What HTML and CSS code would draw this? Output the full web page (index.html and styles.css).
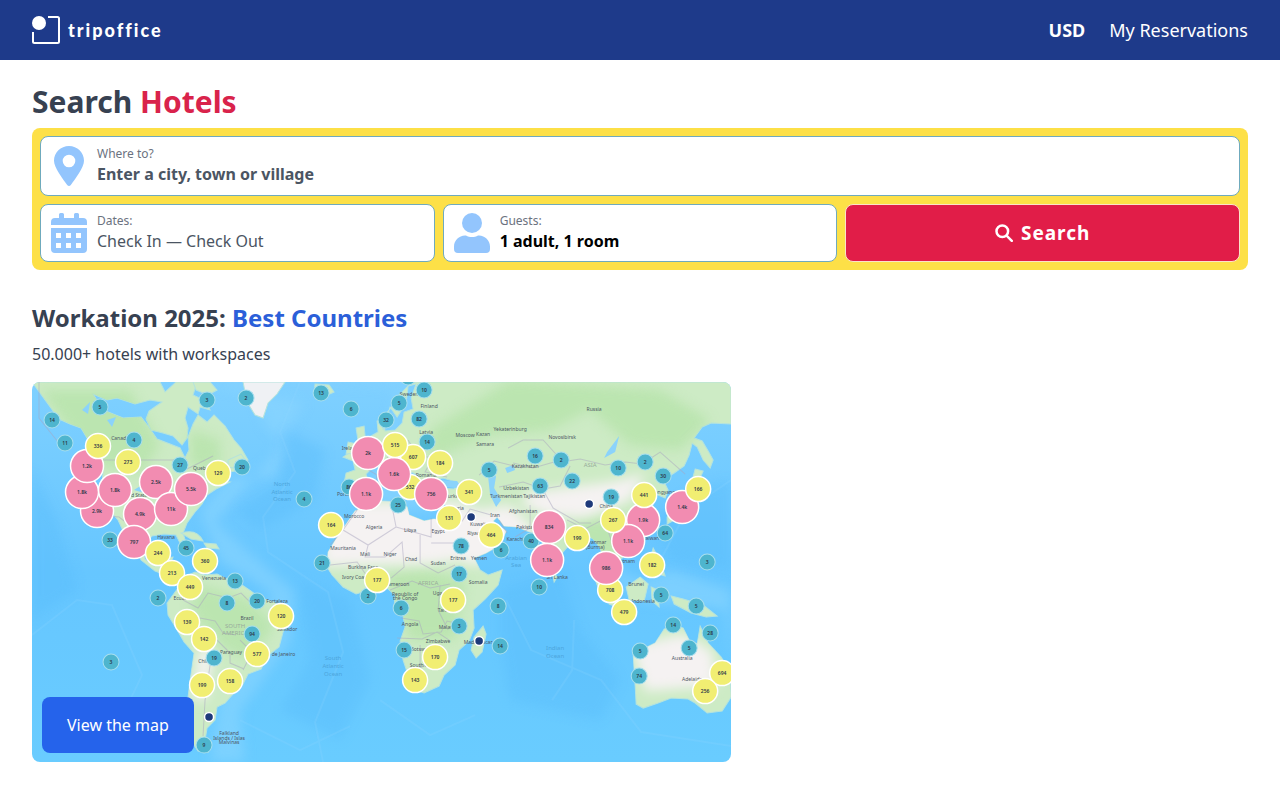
FILE: index.html
```html
<!DOCTYPE html>
<html lang="en">
<head>
<meta charset="utf-8">
<meta name="viewport" content="width=device-width, initial-scale=1">
<title>tripoffice</title>
<link rel="stylesheet" href="styles.css">
</head>
<body>
<header class="topbar">
  <a class="brand" href="#">
    <svg class="brand-mark" viewBox="0 0 28 28" aria-hidden="true"><circle cx="7" cy="7" r="7"/><path d="M16 1h9.500q1.500 0 1.500 1.500v23q0 1.500-1.500 1.500h-23q-1.500 0-1.500-1.500v-9.500"/></svg>
    <span>tripoffice</span>
  </a>
  <nav class="topnav">
    <button class="currency" type="button">USD</button>
    <a href="#">My Reservations</a>
  </nav>
</header>
<main class="page">
  <h1>Search <span class="red">Hotels</span></h1>
  <form class="search">
    <label class="field place" for="place">
      <svg class="field-icon" viewBox="0 0 36 40" aria-hidden="true"><path fill-rule="evenodd" d="M18 0C9.700 0 3 6.600 3 14.800c0 6.500 8.700 18.200 13 23.900q2 2.500 4 0c4.300-5.700 13-17.400 13-23.900C33 6.600 26.300 0 18 0zm0 8.700a6.300 6.300 0 1 1 0 12.600 6.300 6.300 0 0 1 0-12.600z"/></svg>
      <span class="field-text"><small>Where to?</small><input id="place" type="text" placeholder="Enter a city, town or village"></span>
    </label>
    <button class="field" type="button">
      <svg class="field-icon" viewBox="0 0 36 40" aria-hidden="true"><path fill-rule="evenodd" d="M0 12V9q0-4 4-4h4V1.500Q8 0 9.500 0h2Q13 0 13 1.500V5h10V1.500Q23 0 24.500 0h2Q28 0 28 1.500V5h4q4 0 4 4v3zM0 15h36v21q0 4-4 4H4q-4 0-4-4zm5 5v5h5v-5zm10 0v5h5v-5zm10 0v5h5v-5zM5 30v5h5v-5zm10 0v5h5v-5zm10 0v5h5v-5z"/></svg>
      <span class="field-text"><small>Dates:</small><span class="dates">Check In — Check Out</span></span>
    </button>
    <button class="field" type="button">
      <svg class="field-icon" viewBox="0 0 36 40" aria-hidden="true"><circle cx="18" cy="10" r="10"/><path d="M11 22.500h1c3.500 2 8.500 2 12 0h1c6 0 11 5 11 11V36q0 4-4 4H4q-4 0-4-4v-2.500c0-6 5-11 11-11z"/></svg>
      <span class="field-text"><small>Guests:</small><strong>1 adult, 1 room</strong></span>
    </button>
    <button class="submit" type="submit">
      <svg viewBox="0 0 18 18" aria-hidden="true"><circle cx="7.300" cy="7.300" r="5.800"/><path d="m11.800 11.800 5 5"/></svg>
      <span>Search</span>
    </button>
  </form>
  <section class="workation">
    <h2>Workation 2025: <span class="blue">Best Countries</span></h2>
    <p>50.000+ hotels with workspaces</p>
    <div class="map-card">
      <svg class="map" viewBox="32 382 699 380" role="img" aria-label="World map of hotels with workspaces">
        <defs>
          <linearGradient id="sea" x1="0" y1="0" x2="0" y2="1"><stop offset="0" stop-color="#7fd0ff"/><stop offset=".5" stop-color="#66c6ff"/><stop offset="1" stop-color="#69ccff"/></linearGradient>
          <filter id="soft" x="-20%" y="-20%" width="140%" height="140%"><feGaussianBlur stdDeviation="6"/></filter>
          <clipPath id="land-clip"><use href="#eurasia"/><use href="#africa"/><use href="#namerica"/><use href="#samerica"/><use href="#australia"/></clipPath>
        </defs>
        <rect x="32" y="382" width="699" height="380" fill="url(#sea)"/>
        <g class="shelf" filter="url(#soft)">
          <path d="M190 382h60l15 45 25 20-15 30-45 0-30 35 20 50 50 30-10 60-40 40-10 70h35l-5-50 50-70 5-50-80-70 60-70 30-50z"/>
          <path d="M290 382h110l-20 70-25 50 40 10 50-5-10-30-40-30 10-60zM595 560l40 40 90 10 6 60v-80l-60-20-30 10z"/>
        </g>
        <g class="deep" filter="url(#soft)">
          <path d="M285 430l40 20-10 50-55 30-25-20 45-30zM300 580l50 20 20 80-30 60-60-30 30-50zM500 590l60-20 20 60 40 50-20 40-90-20-10-60zM650 520l45-30 36-10v90l-60-10zM32 470l25 50 20 70-45 30z"/>
        </g>
        <g class="ridge"><path d="M300 382l-20 50 15 40-32 45 5 35 60 40 15 60-28 70 8 40M506 600l25 50 70 30 40 52 90 14M574 620l-2 50-20 30M32 635l45-35 35 5 30 70-12 25M655 570l32-60 44-30M240 720l60 30 50-24M380 700l50 35 45-20"/></g>
        <g class="land">
          <path id="namerica" d="M32 382h128l5 10 11-10h21l-4 13 13 6 4 9-10-3-2 7-10-7-3 11 3 10-1 10-5 7-9-9-10-3-12-3-5-11 3-8 13-9-12-2-15 4-18-6-10 2-14-6 10 16 20 8 18-1 7 9 9 13 13 5 10 4 5 10 4-8-1-13 5-13 5-9 9 7 7-7 11 11 9 14 7 8 7 12-6 10-13 2-9 9 10 1-14 7-9 6-5 9-7 8-8 11-4 10 4 13-5 1-6-12-12-1-12 2-9 10 2 13 9 7 8-2 3-6 8-1-4 9 10 5 6 13 9 4-2 4-11-5-10-10-16-6-14-11-7-15-10-12-6-13-13-15-3-20 1-13-2-18-11-11-9-15-11-4-11-5z"/>
          <path d="M181 533q16-5 22 8l-12-2zM204 543l12 1 3 5-12-1zM228 460l13-6 5 7-7 8-11-2zM193 382h17l7 8-9 5-12-5z"/>
          <path class="ice" d="M243 382h42l-8 12-9 9-5 15-8-3-8-13-2-10z"/>
          <path id="samerica" d="M178 588l8-12 9-4 10 3 12-1 12 6 10 3 12 8 9 7 14 4 11 9 4 8-6 13-4 15-12 9-6 13-13 5-5 10-11 11-7 8-8 4-2 13-8 8-2 12 3 12-10-1-8-12-1-14-2-20 3-24 4-28-10-11-8-14-8-13-1-12z"/>
          <path id="eurasia" d="M383 430l-1-12 8-9 8-13 14-14h319v42l-20-1-9 4-8 11 8 3 6 10 5 9-3 8-7-8-6-13-5-4-3 12-5 11-10 7-11 7 5 10-3 8-7-3-6-8-8 5 9 14-4 12-11 9-7 3-7 3-2 5 4 12-4 8-6 4-3-9-5-1 2 13-7-8-3-9-7-9-8-5-9 3-6 7-9 10-5 10-9-8-5-15-6-7-9-3-10-4-13-1-7-9-4 4 13 10-6 14-14 8-12 5-8-11-9-18-4-13 6-6-12-4-8-5-4-3 4-10 15 1 2-7-13-4-11 2-4 9-6-2-6-13-8-3-5-11-4-1 3 15 7 9-4 2-8-10-9-12-6-1-8 4-8 8 2 7-9 8-12 3-3-9 2-10 9-3-2-9-10-4 9-6 10-6 9-9 7-4-1-11 6-2 2 12 10-1 7-7 2-11 9-3-2-11 5-14-8 2-2 17-9 14-7-10z"/>
          <path d="M356 428l8-2 1 10 6 11-1 9-11 1 4-8-5-8zM348 442l9 2-2 9-9 1zM315 384l14 1 5 7-11 5-9-4z"/>
          <path id="africa" d="M355 511l12-5 15-5 18 1 7 5 2 8 15 6 10-2 12 2 10 2 8 19 9 14 7 14 8 5 14-5-4 15-13 14-12 11 1 18-5 13-10 9-4 15-11 10-5 11-15 7-9-3-7-15-5-15-3-19 5-14-2-11-9-9 1-12-8-7-14 1-17 5-13-7-11-12-5-8 1-15 8-13z"/>
          <path d="M483 626l3 8-4 18-6 6-5-8 3-13zM552 571l5 6-3 5zM590 565l12 12 14 22-8 2-11-16zM608 600l14 4 14 3-14 2-13-5zM626 587l14-10 8 7-4 17-15-1zM651 587l7 3 1 17-7-6zM671 596l12 3 20 6 14 11-11 1-15-4-17-9zM653 548l7 13 5 15-7-2-8-15zM695 469l8 2-8 18-9 14-7 14-12 7 0-7 14-11 8-15zM704 696l12 0-2 11-5 2z"/>
          <path id="australia" d="M633 654l10-5 12-6 9-14 11-4 8 3 6 12 8 4 3-18 8 17 13 14 9 15 1 25-9 14-15 2-12-10-7-4-17-1-13 5-15 5-7-4-1-18z"/>
        </g>
        <g clip-path="url(#land-clip)">
          <g class="green" filter="url(#soft)">
            <path d="M430 430l80-50 150 10 50 30-30 30-50-5-40-35-40 20-60 5-60 25zM40 390l90 0 30 55-20 30-40-10-30-35zM190 430l30 10 0 30-30-5zM200 585l50 15 25 25-25 35-25-10-35-40zM385 575l40-5 40 10-10 60-45 0zM580 520l60-5 10 20-40 25-45-15zM510 530l30 20 20 30-30-20z"/>
          </g>
          <g class="sand" filter="url(#soft)">
            <path d="M325 502h125l22 56-40 6-110 2zM450 500l30 10 30-5 25 25-25 30-45 5zM530 492l80-10 35-8-15 26-45 18-40-3-25-12zM632 646l50-12 30 17 5 35-72 5zM198 650l16 0-8 50-12 0z"/>
          </g>
        </g>
        <g class="lakes"><path d="M134 490q10-8 18-1l8 10-9-4zM163 493l8 5-6 4zM435 480l22 1 5 8-14-2-11 3zM488 477l8-1-2 12 7 12-5 7-6-12zM505 468l8-3 2 5-8 3zM607 452l12-16-4 16-11 6zM456 590l5 2-2 7-5-3zM82 410l8-8-2 12zM107 420l9-3-4 10z"/></g>
        <g class="borders">
          <path d="M90 460l83 0 12 10 12-6 16-8M39 382v36l19 24M95 515l24 2 13 10M183 600l15 8 10-15 20 5 13-5 10 10M185 625l15-7 15 3 8 12 13 2M200 640l17 0 13 13 0 10 14 6M210 665l-5 35-2 36M240 640l12 12-9 18M357 510l-14 20 25 15 28-18-5-25M343 530l-13 15M396 527l35 10V518M431 543l27 0M368 545l-3 12 20 0 17-15 2 25-13 11M420 535v28l18 10 17-8M330 565l27-3 14 20M390 590l22-9 18 7 20-4M401 618l18 3 4 13 18-2 6-11 16 4M397 638l25 1 15-7 12 8M420 645l0 23 18-10M440 585l-2 25 10 20M452 525l10-4 8-12 21 6M499 520l8 13M508 448l15-8 20 0 18 20-28 8-20-5M561 462l19-3 25 6 20-3 17 2 18-12 25 22M499 487l24-5 20 7 17-3 10-20M543 490l10 18 26 15 12 0M530 505l0 23-15 9M567 520l18 9 19-10 10 30M408 440l10 17 15 0-8 15 22 5M387 457l8 18 20 7M360 465l17 10-3 17M479 475l15-14 28 7"/>
        </g>
        <g id="places" class="places"></g>
        <g id="oceans" class="oceans"></g>
        <g id="markers" class="markers"></g>
      </svg>
      <a class="map-button" href="#">View the map</a>
    </div>
  </section>
</main>
<script src="map.js"></script>
</body>
</html>
```
FILE: styles.css
```css
* { box-sizing: border-box; }
body {
  margin: 0;
  background: #fff;
  color: #374151;
  font-family: "Noto Sans", "Open Sans", sans-serif;
  font-size: 16px;
  line-height: 24px;
}
button, input { font: inherit; color: inherit; }
button { cursor: pointer; }
.topbar {
  display: flex;
  align-items: center;
  justify-content: space-between;
  height: 60px;
  padding: 0 32px;
  background: #1e3a8a;
  color: #fff;
}
.topbar a { color: inherit; text-decoration: none; }
.brand {
  display: flex;
  align-items: center;
  gap: 8px;
  font-family: Lato, sans-serif;
  font-size: 18px;
  font-weight: 900;
  letter-spacing: 2px;
}
.brand-mark { width: 28px; height: 28px; fill: #fff; }
.brand-mark path { fill: none; stroke: #fff; stroke-width: 2; }
.topnav { display: flex; align-items: center; gap: 24px; font-size: 18px; }
.currency { padding: 0; border: 0; background: none; font-weight: 700; }
.page { padding: 24px 32px; }
h1, h2, p { margin: 0; }
h1 { font-size: 30px; line-height: 36px; font-weight: 700; padding-bottom: 8px; }
h2 { font-size: 24px; line-height: 32px; font-weight: 700; }
.red { color: #d9234b; }
.blue { color: #2b5fd9; }
.search {
  display: grid;
  grid-template-columns: repeat(3, 1fr);
  gap: 8px;
  padding: 8px;
  border-radius: 8px;
  background: #fde047;
}
.field {
  display: flex;
  align-items: center;
  gap: 10px;
  min-height: 58px;
  padding: 4px 10px;
  border: 1px solid #6faabd;
  border-radius: 8px;
  background: #fff;
  text-align: left;
}
.place { grid-column: 1 / -1; min-height: 60px; }
.field-icon { flex: none; width: 36px; height: 40px; fill: #93c5fd; }
.field-text { display: flex; flex: 1; flex-direction: column; color: #4b5563; }
.field-text small { font-size: 12px; line-height: 16px; color: #6b7280; }
.field-text input {
  width: 100%;
  height: 24px;
  padding: 0;
  border: 0;
  outline: 0;
  background: none;
  font-weight: 700;
}
.field-text input::placeholder { color: #4b5563; opacity: 1; }
.field-text strong { color: #000; font-weight: 700; }
.submit {
  display: flex;
  align-items: center;
  justify-content: center;
  gap: 8px;
  border: 1px solid #fbe3c8;
  border-radius: 8px;
  background: #e11d48;
  color: #fff;
  font-size: 19px;
  font-weight: 700;
  letter-spacing: 1px;
}
.submit svg { width: 18px; height: 18px; fill: none; stroke: #fff; stroke-width: 2.5; stroke-linecap: round; }
.workation { padding-top: 32px; }
.workation p { padding: 8px 0 16px; }
.map-card { position: relative; width: 57.5%; overflow: hidden; border-radius: 8px; }
.map { display: block; width: 100%; }
.map-button {
  position: absolute;
  left: 10px;
  bottom: 9px;
  padding: 16px 25px;
  border-radius: 8px;
  background: #2563eb;
  color: #fff;
  text-decoration: none;
}
.shelf { fill: #8ad5ff; opacity: .6; }
.deep { fill: #58bcfb; opacity: .4; }
.ridge { fill: none; stroke: #8fd8ff; stroke-width: 2; opacity: .2; }
.land { fill: #cdebc5; stroke: #b5e3dd; stroke-width: 1; }
.land .ice { fill: #eff1f4; }
.green { fill: #b5e3a9; opacity: .75; }
.sand { fill: #f5f2f2; }
.lakes { fill: #8bd3fb; }
.borders { fill: none; stroke: #a9a5c0; stroke-width: 1; opacity: .5; }
.places { fill: #4c5563; font-size: 5px; text-anchor: middle; }
.oceans { fill: #4da5dc; font-size: 6px; text-anchor: middle; }
.oceans .region { fill: #98ab9b; }
.markers { stroke: #fff; font-size: 5px; font-weight: 600; text-anchor: middle; }
.markers text { fill: #2d3748; stroke: none; }
.small { fill: #4eb5ce; stroke: #a8dfee; stroke-width: 1; }
.medium { fill: #f1ee72; stroke-width: 1.5; }
.large { fill: #f28cb1; stroke-width: 1.5; }
.dot { fill: #1e3a7a; stroke-width: 1.5; }
```
FILE: map.js
```js
const svgNS = "http://www.w3.org/2000/svg";

function add(parent, tag, attributes, label) {
  const node = document.createElementNS(svgNS, tag);
  for (const key in attributes) node.setAttribute(key, attributes[key]);
  if (label) node.textContent = label;
  document.getElementById(parent).append(node);
}

const places = [
  ["Canada", 120, 440], ["Quebec", 202, 470], ["United States", 134, 497], ["Havana", 166, 539],
  ["Venezuela", 214, 580], ["Ecuador", 183, 600], ["Brazil", 247, 620], ["Paraguay", 231, 654],
  ["Chile", 204, 663], ["Fortaleza", 277, 603], ["Salvador", 287, 631], ["Rio de Janeiro", 279, 656],
  ["Falkland", 229, 735], ["Islands / Islas", 229, 740], ["Malvinas", 229, 744],
  ["Sweden", 409, 396], ["Finland", 429, 408], ["Latvia", 426, 434], ["Ireland", 350, 450],
  ["Moscow", 465, 437], ["Kazan", 483, 436], ["Samara", 485, 446], ["Romania", 426, 477],
  ["Turkey", 453, 498], ["Syria", 458, 510], ["Iran", 495, 517], ["Kuwait", 478, 526], ["Riyadh", 475, 535],
  ["Morocco", 354, 518], ["Algeria", 374, 529], ["Libya", 410, 532], ["Egypt", 438, 533],
  ["Mauritania", 343, 550], ["Mali", 365, 556], ["Niger", 390, 556], ["Chad", 411, 561],
  ["Sudan", 438, 565], ["Eritrea", 458, 560], ["Yemen", 479, 560], ["Burkina Faso", 363, 569],
  ["Ivory Coast", 355, 579], ["Cameroon", 397, 586], ["Somalia", 478, 584], ["Uganda", 442, 595],
  ["Republic of", 405, 596], ["the Congo", 405, 600], ["Tanzania", 448, 612], ["Angola", 410, 626],
  ["Malawi", 447, 629], ["Zimbabwe", 438, 643], ["Botswana", 422, 651], ["South Africa", 424, 667],
  ["Madagascar", 478, 644], ["Portugal", 347, 496], ["Russia", 594, 411], ["Yekaterinburg", 510, 431],
  ["Novosibirsk", 562, 439], ["Kazakhstan", 525, 468], ["Uzbekistan", 516, 490],
  ["Turkmenistan", 506, 498], ["Tajikistan", 534, 498], ["Afghanistan", 523, 513],
  ["Pakistan", 526, 529], ["Karachi", 515, 541], ["China", 606, 508], ["Myanmar", 595, 544],
  ["(Burma)", 595, 549], ["Vietnam", 625, 563], ["Taiwan", 651, 540], ["Pyongyang", 662, 494],
  ["Sri Lanka", 557, 579], ["Brunei", 636, 586], ["Indonesia", 643, 603], ["Australia", 682, 660],
  ["Adelaide", 692, 681]
];
places.forEach(([name, x, y]) => add("places", "text", { x, y }, name));

const regions = [
  ["North", 282, 486], ["Atlantic", 282, 494], ["Ocean", 282, 501], ["South", 333, 660],
  ["Atlantic", 333, 668], ["Ocean", 333, 676], ["Indian", 555, 650], ["Ocean", 555, 658],
  ["Arabian", 516, 560], ["Sea", 516, 567],
  ["SOUTH", 235, 628, 1], ["AMERICA", 235, 635, 1], ["AFRICA", 428, 585, 1], ["ASIA", 590, 467, 1]
];
regions.forEach(([name, x, y, land]) =>
  add("oceans", "text", { x, y, class: land ? "region" : "sea" }, name));

const radius = { small: 8, medium: 12.5, large: 16.5, dot: 4.5 };
const markers = {
  small: [
    ["5", 100, 407], ["14", 52, 420], ["11", 65, 443], ["4", 134, 440], ["3", 207, 400], ["2", 246, 398],
    ["27", 180, 465], ["20", 242, 467], ["33", 110, 540], ["45", 186, 548], ["13", 235, 581],
    ["8", 227, 603], ["20", 257, 601], ["2", 158, 598], ["94", 252, 634], ["19", 214, 658],
    ["3", 111, 662], ["9", 204, 745], ["4", 304, 499], ["13", 321, 393], ["6", 351, 409],
    ["32", 386, 420], ["5", 399, 403], ["10", 424, 390], ["82", 419, 419], ["14", 427, 442],
    ["86", 349, 487], ["25", 398, 505], ["", 408, 377], ["5", 489, 470], ["21", 322, 563],
    ["78", 461, 546], ["6", 501, 550], ["17", 459, 574], ["2", 368, 596], ["6", 401, 608],
    ["3", 459, 626], ["15", 404, 650], ["8", 498, 606], ["14", 500, 646], ["16", 535, 456],
    ["2", 561, 460], ["22", 572, 481], ["63", 540, 486], ["10", 618, 468], ["2", 645, 462],
    ["30", 663, 476], ["19", 611, 497], ["40", 531, 541], ["64", 665, 533], ["3", 707, 562],
    ["10", 539, 587], ["5", 661, 595], ["5", 696, 606], ["14", 673, 625], ["28", 710, 633],
    ["5", 640, 651], ["5", 689, 648], ["74", 639, 676]
  ],
  mediumBelow: [["607", 413, 457], ["532", 410, 487], ["708", 610, 590]],
  large: [
    ["2.9k", 97, 511], ["1.8k", 82, 492], ["1.2k", 87, 466], ["1.8k", 115, 490], ["2.5k", 156, 482],
    ["4.9k", 140, 514], ["11k", 171, 509], ["5.5k", 191, 489], ["797", 134, 542], ["2k", 368, 453],
    ["1.6k", 394, 474], ["1.1k", 366, 494], ["756", 431, 494], ["834", 549, 527], ["1.1k", 547, 560],
    ["1.9k", 643, 520], ["1.1k", 628, 541], ["1.4k", 682, 507], ["986", 606, 568]
  ],
  medium: [
    ["336", 98, 446], ["273", 128, 462], ["129", 218, 473], ["244", 158, 553], ["360", 205, 561],
    ["213", 172, 573], ["449", 190, 587], ["139", 187, 622], ["142", 204, 639], ["577", 257, 654],
    ["199", 202, 685], ["158", 230, 681], ["120", 281, 616], ["515", 395, 445],
    ["184", 440, 463], ["341", 469, 492], ["131", 449, 518], ["464", 491, 535],
    ["164", 331, 525], ["177", 377, 580], ["177", 453, 600], ["170", 435, 657], ["143", 415, 680],
    ["441", 644, 495], ["166", 698, 489], ["267", 613, 520], ["199", 577, 538], ["182", 652, 565],
    ["479", 624, 612], ["694", 722, 673], ["256", 705, 691]
  ],
  dot: [["", 471, 517], ["", 589, 504], ["", 479, 641], ["", 209, 717]]
};

function draw(kind, list) {
  list.forEach(([label, x, y]) => {
    add("markers", "circle", { class: kind, cx: x, cy: y, r: radius[kind] });
    if (label) add("markers", "text", { x, y: y + 2 }, label);
  });
}
draw("small", markers.small);
draw("medium", markers.mediumBelow);
draw("large", markers.large);
draw("medium", markers.medium);
draw("dot", markers.dot);
```
